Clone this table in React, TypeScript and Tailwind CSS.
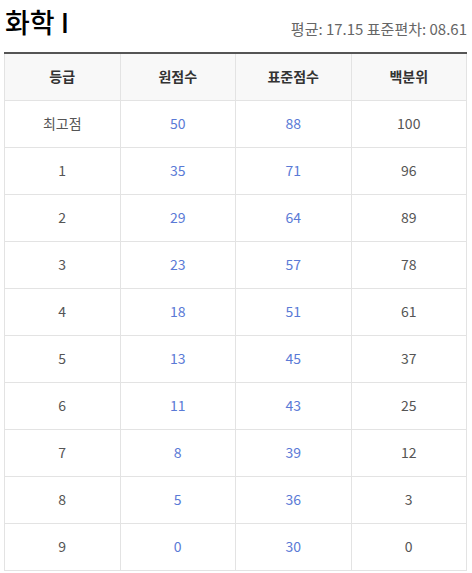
const rows = [
    ["최고점", "50", "88", "100"],
    ["1", "35", "71", "96"],
    ["2", "29", "64", "89"],
    ["3", "23", "57", "78"],
    ["4", "18", "51", "61"],
    ["5", "13", "45", "37"],
    ["6", "11", "43", "25"],
    ["7", "8", "39", "12"],
    ["8", "5", "36", "3"],
    ["9", "0", "30", "0"],
];

const App = () => {
    return (
        <div
            className="w-[472px] bg-white pl-[4px] pr-[5px]"
            style={{ fontFamily: '"Noto Sans CJK KR", "Noto Sans", sans-serif' }}
        >
            {/* Header */}
            <div className="flex justify-between items-end h-[52px] pb-[10px]">
                <h2 className="text-[27px] leading-[36px] font-medium text-black pl-[1px] mb-[2px]">화학 I</h2>
                <span className="text-[15px] leading-[22px] text-[#666] mb-[2px]">평균: 17.15 표준편차: 08.61</span>
            </div>

            {/* Table */}
            <table className="w-full table-fixed border-collapse border-t-2 border-t-[#555] text-[14px] text-center">
                <thead className="bg-[#f8f8f8]">
                    <tr className="h-[47px]">
                        {["등급", "원점수", "표준점수", "백분위"].map((h) => (
                            <th key={h} className="border border-[#e3e3e3] border-t-0 font-bold text-[#333]">
                                {h}
                            </th>
                        ))}
                    </tr>
                </thead>
                <tbody>
                    {rows.map((r) => (
                        <tr key={r[0]} className="h-[47px]">
                            <td className="border border-[#e3e3e3] text-[#555]">{r[0]}</td>
                            <td className="border border-[#e3e3e3] text-[#5a7ad6]">{r[1]}</td>
                            <td className="border border-[#e3e3e3] text-[#5a7ad6]">{r[2]}</td>
                            <td className="border border-[#e3e3e3] text-[#555]">{r[3]}</td>
                        </tr>
                    ))}
                </tbody>
            </table>
        </div>
    );
};

export default App;
